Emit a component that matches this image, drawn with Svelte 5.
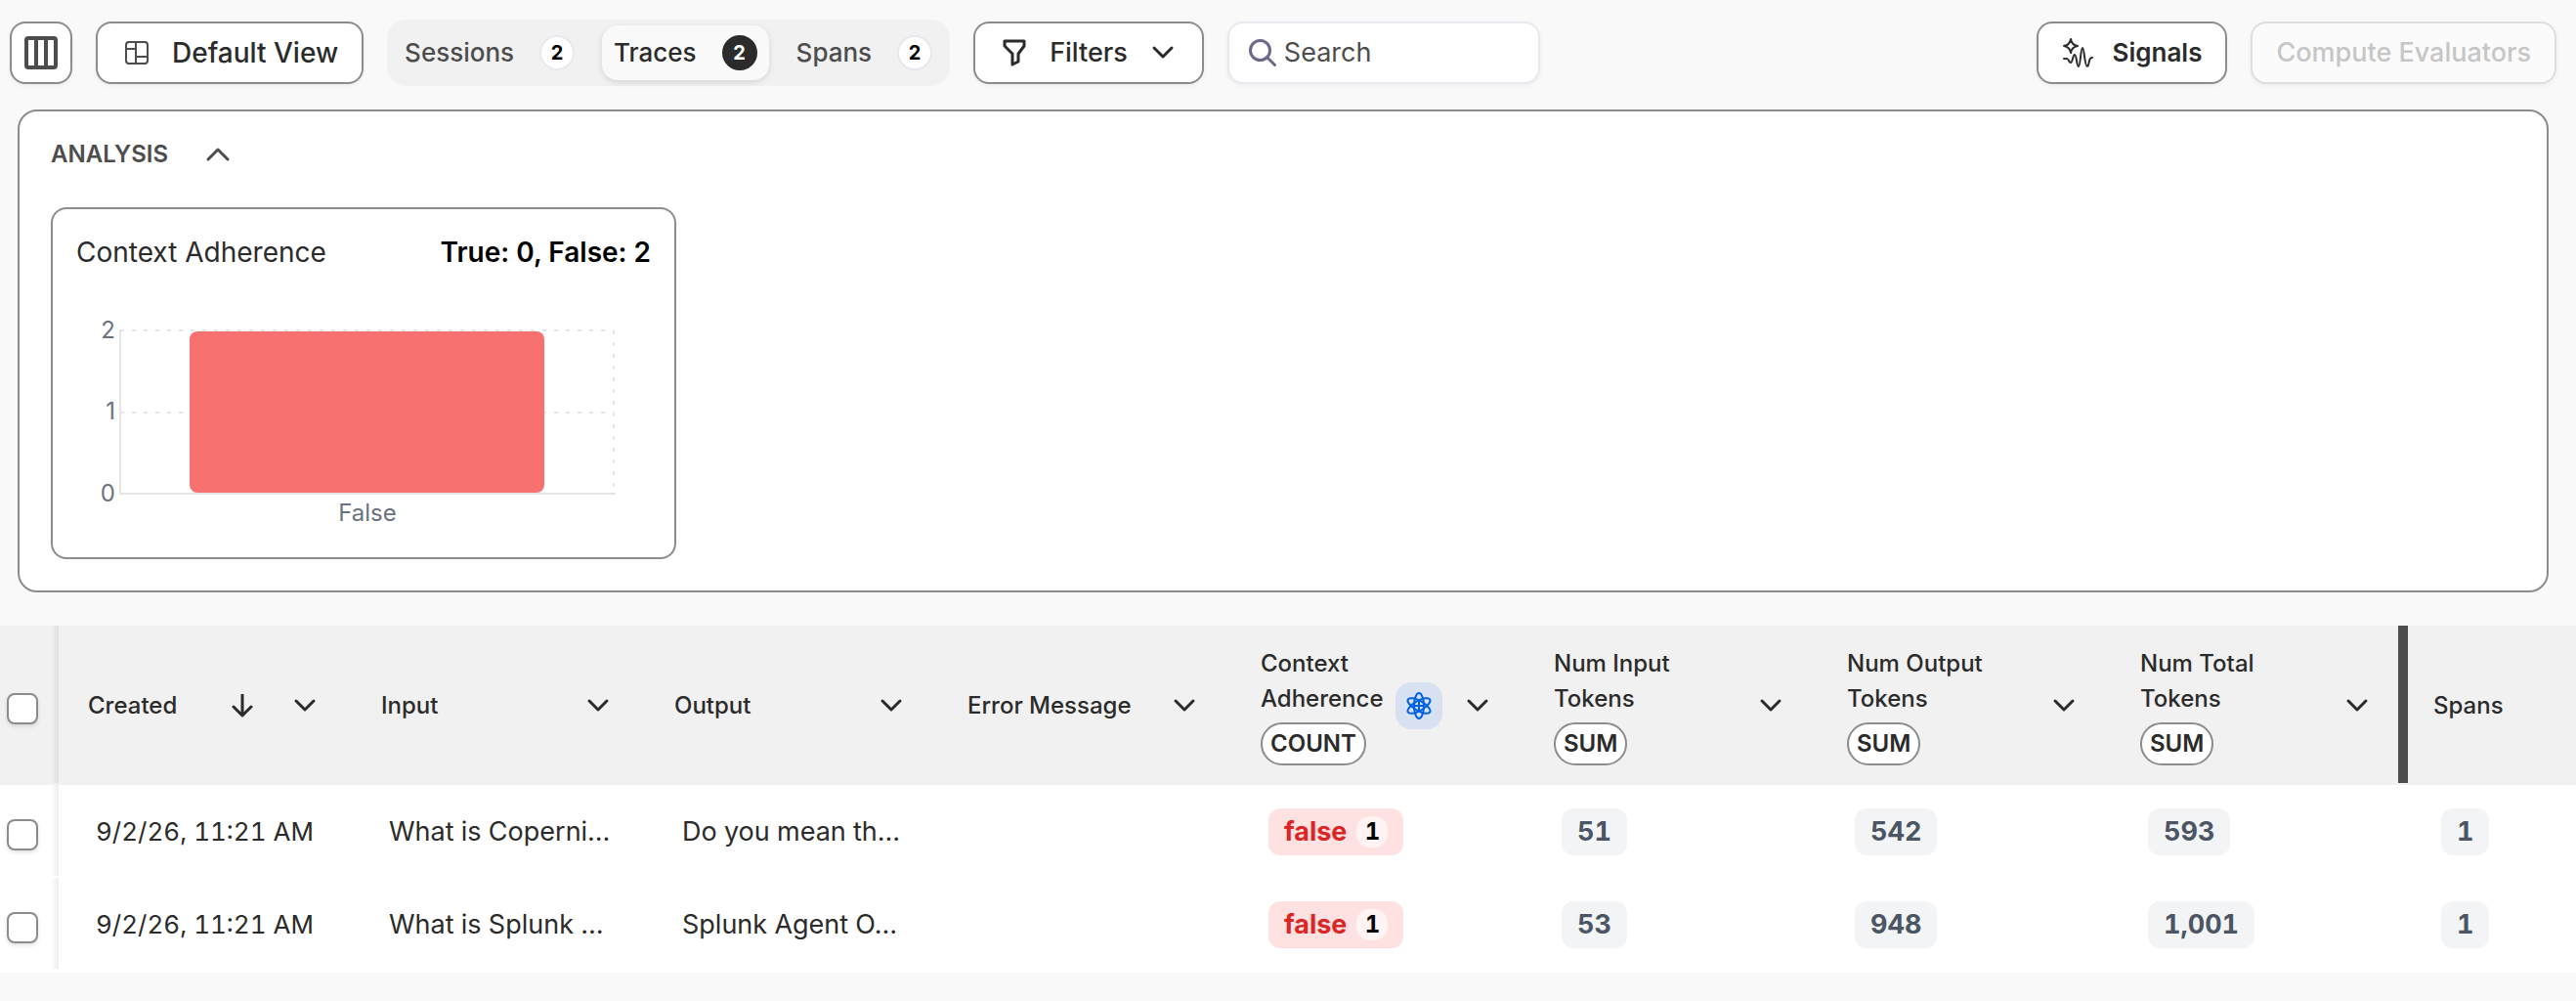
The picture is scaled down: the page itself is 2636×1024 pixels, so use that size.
<script>
  let tabs = [
    { name: 'Sessions', count: 2 },
    { name: 'Traces', count: 2 },
    { name: 'Spans', count: 2 }
  ];
  let active = $state('Traces');
  let open = $state(true);

  const columns = [
    { name: 'Created', sorted: true },
    { name: 'Input' },
    { name: 'Output' },
    { name: 'Error Message' },
    { name: 'Context Adherence', agg: 'COUNT', metric: true },
    { name: 'Num Input Tokens', agg: 'SUM' },
    { name: 'Num Output Tokens', agg: 'SUM' },
    { name: 'Num Total Tokens', agg: 'SUM', resizing: true }
  ];

  const rows = [
    { created: '9/2/26, 11:21 AM', input: 'What is Coperni…', output: 'Do you mean th…', adherence: 'false', count: 1, tokens: ['51', '542', '593'], spans: 1 },
    { created: '9/2/26, 11:21 AM', input: 'What is Splunk …', output: 'Splunk Agent O…', adherence: 'false', count: 1, tokens: ['53', '948', '1,001'], spans: 1 }
  ];
</script>

{#snippet chevron()}
  <svg class="chevron" viewBox="0 0 24 24" aria-hidden="true"><path d="M3 7l9 9 9-9" /></svg>
{/snippet}

<div class="page">
  <header class="toolbar">
    <button class="btn icon-only" aria-label="Columns">
      <svg class="columns-icon" viewBox="0 0 34 34" aria-hidden="true">
        <rect x="2" y="2" width="30" height="30" rx="2" />
        <path d="M12 2v30M22 2v30" />
      </svg>
    </button>
    <button class="btn view">
      <svg class="view-icon" viewBox="0 0 24 24" aria-hidden="true">
        <rect x="1" y="1" width="22" height="22" rx="3" />
        <path d="M11 1v22M1 8h10M11 16h12" />
      </svg>
      Default View
    </button>
    <div class="tabs" role="tablist">
      {#each tabs as tab}
        <button class="tab" class:active={active === tab.name} role="tab" aria-selected={active === tab.name} onclick={() => (active = tab.name)}>
          {tab.name}<span class="count">{tab.count}</span>
        </button>
      {/each}
    </div>
    <button class="btn filters">
      <svg class="funnel" viewBox="0 0 24 28" aria-hidden="true">
        <path d="M2 2h20v5l-6 8v8l-6 3V15L2 7z" />
      </svg>
      Filters
      {@render chevron()}
    </button>
    <label class="search">
      <svg viewBox="0 0 28 28" aria-hidden="true">
        <circle cx="11.500" cy="11.500" r="10" /><path d="M18.500 18.500L26.500 26.500" />
      </svg>
      <input type="text" placeholder="Search" aria-label="Search" />
    </label>
    <div class="actions">
      <button class="btn signals">
        <svg class="signals-icon" viewBox="0 0 32 32" aria-hidden="true">
          <path d="M9 2q1 6 7 7q-6 1-7 7q-1-6-7-7q6-1 7-7z" />
          <path d="M2 22h3c2 0 2 4 4 4s2-8 4-8 2 12 4 12 2-19 4-19 2 19 5 19c2 0 1-10 5-9" />
        </svg>
        Signals
      </button>
      <button class="btn compute" disabled>Compute Evaluators</button>
    </div>
  </header>

  <section class="analysis">
    <button class="analysis-toggle" aria-expanded={open} onclick={() => (open = !open)}>
      ANALYSIS
      <svg class="caret" viewBox="0 0 26 16" aria-hidden="true"><path d="M3 13L13 3l10 10" /></svg>
    </button>
    {#if open}
      <article class="card">
        <div class="card-head">
          <h2>Context Adherence</h2>
          <strong>True: 0, False: 2</strong>
        </div>
        <svg class="chart" viewBox="0 0 588 230" role="img" aria-label="Context Adherence: False 2">
          <path class="grid" d="M45 22H550M45 106H550M550 22V189" />
          <rect class="bar" x="116" y="23" width="363" height="165" rx="8" />
          <path class="axis" d="M45 22V189H551" />
          <text x="40" y="30" text-anchor="end">2</text>
          <text x="40" y="113" text-anchor="end">1</text>
          <text x="40" y="197" text-anchor="end">0</text>
          <text x="298" y="217" text-anchor="middle">False</text>
        </svg>
      </article>
    {/if}
  </section>

  <div class="table-wrap">
    <table>
      <thead>
        <tr>
          <th class="check"><input type="checkbox" aria-label="Select all rows" /></th>
          {#each columns as col}
            <th class="col" class:resizing={col.resizing}>
              <div class="head">
                <div class="title" class:narrow={col.agg}>
                  <span>{col.name}</span>
                  {#if col.agg}<span class="agg">{col.agg}</span>{/if}
                </div>
                {#if col.metric}
                  <span class="atom">
                    <svg viewBox="0 0 28 28" aria-hidden="true">
                      <ellipse cx="14" cy="14" rx="5" ry="13" />
                      <ellipse cx="14" cy="14" rx="5" ry="13" transform="rotate(60 14 14)" />
                      <ellipse cx="14" cy="14" rx="5" ry="13" transform="rotate(120 14 14)" />
                      <path d="M14 10v8M10 14h8" />
                    </svg>
                  </span>
                {/if}
                {#if col.sorted}
                  <svg class="sort" viewBox="0 0 22 24" aria-label="Sorted descending"><path d="M11 1v21M2 13l9 9 9-9" /></svg>
                {/if}
                <button class="menu" aria-label={`${col.name} options`}>{@render chevron()}</button>
              </div>
            </th>
          {/each}
          <th>Spans</th>
        </tr>
      </thead>
      <tbody>
        {#each rows as row, i}
          <tr>
            <td class="check"><input type="checkbox" aria-label={`Select row ${i + 1}`} /></td>
            <td class="date">{row.created}</td>
            <td>{row.input}</td>
            <td>{row.output}</td>
            <td></td>
            <td><span class="pill bad">{row.adherence}<span class="num">{row.count}</span></span></td>
            {#each row.tokens as value}
              <td><span class="pill">{value}</span></td>
            {/each}
            <td><span class="pill">{row.spans}</span></td>
          </tr>
        {/each}
      </tbody>
    </table>
  </div>
</div>

<style>
  :global(body) {
    background: #f9f9f9;
  }
  .page {
    font-family: Inter, 'Liberation Sans', sans-serif;
    font-size: 28px;
    line-height: 36px;
    color: #2b2b2b;
  }
  .page * {
    box-sizing: border-box;
  }
  button,
  input {
    font: inherit;
    color: inherit;
    margin: 0;
  }
  svg {
    display: block;
    flex: none;
    fill: none;
    stroke: currentColor;
    stroke-width: 2;
    stroke-linecap: round;
    stroke-linejoin: round;
  }
  .chevron {
    width: 24px;
    height: 24px;
    stroke-width: 3;
  }

  .toolbar {
    display: flex;
    align-items: center;
    gap: 24px;
    padding: 20px 20px 24px 10px;
  }
  .btn {
    display: flex;
    align-items: center;
    height: 64px;
    padding: 0 24px;
    border: 2px solid #8c8c8c;
    border-radius: 16px;
    background: #fff;
    font-weight: 500;
    white-space: nowrap;
    box-shadow: 0 2px 4px #0000000d;
  }
  .icon-only {
    width: 64px;
    padding: 0;
    justify-content: center;
    color: #4d4d4d;
  }
  .columns-icon {
    width: 34px;
    height: 34px;
    stroke-width: 4;
  }
  .view {
    gap: 24px;
    padding: 0 24px 0 28px;
  }
  .view-icon {
    width: 24px;
    height: 24px;
    color: #4d4d4d;
  }
  .tabs {
    display: flex;
    align-items: center;
    gap: 16px;
    height: 68px;
    padding: 0 6px;
    border-radius: 20px;
    background: #f1f1f1;
  }
  .tab {
    display: flex;
    align-items: center;
    gap: 26px;
    height: 56px;
    padding: 0 12px;
    border: 0;
    border-radius: 16px;
    background: none;
    color: #4d4d4d;
    font-size: 26px;
    font-weight: 500;
  }
  .tab.active {
    background: #f9f9f9;
    color: #2b2b2b;
    box-shadow: 0 2px 6px #0000001f;
  }
  .count {
    display: flex;
    align-items: center;
    justify-content: center;
    width: 36px;
    height: 36px;
    border: 2px solid #e8e8ee;
    border-radius: 18px;
    background: #fff;
    color: #000;
    font-size: 20px;
    font-weight: 700;
  }
  .active .count {
    border-color: #2b2b2b;
    background: #2b2b2b;
    color: #fff;
  }
  .filters {
    gap: 24px;
    padding: 0 28px;
    font-size: 27px;
  }
  .funnel {
    width: 24px;
    height: 28px;
    stroke-width: 3;
  }
  .search {
    display: flex;
    align-items: center;
    gap: 8px;
    width: 320px;
    height: 64px;
    padding: 0 20px;
    border: 2px solid #e8e8ee;
    border-radius: 16px;
    background: #fff;
    font-size: 27px;
    box-shadow: 0 2px 4px #0000000d;
  }
  .search svg {
    width: 28px;
    height: 28px;
    color: #6e6787;
    stroke-width: 3;
  }
  .search input {
    flex: 1;
    min-width: 0;
    padding: 0;
    border: 0;
    outline: 0;
    background: none;
  }
  .search input::placeholder {
    color: #4d4d4d;
    opacity: 1;
  }
  .actions {
    display: flex;
    gap: 24px;
    margin-left: auto;
  }
  .signals {
    gap: 20px;
    font-size: 26px;
    font-weight: 600;
  }
  .signals-icon {
    width: 32px;
    height: 32px;
  }
  .compute {
    border-color: #dedede;
    background: #fbfbfb;
    color: #c6c6c6;
    font-size: 27px;
  }

  .analysis {
    margin: 0 28px 0 18px;
    padding: 20px 32px 32px;
    border: 2px solid #8c8c8c;
    border-radius: 20px;
    background: #fff;
  }
  .analysis-toggle {
    display: flex;
    align-items: center;
    gap: 38px;
    height: 48px;
    padding: 0;
    border: 0;
    background: none;
    color: #4d4d4d;
    font-size: 24px;
    font-weight: 600;
  }
  .caret {
    width: 26px;
    height: 16px;
    stroke-width: 3;
  }
  .card {
    width: 640px;
    height: 360px;
    margin-top: 30px;
    padding: 26px 24px;
    border: 2px solid #8c8c8c;
    border-radius: 16px;
  }
  .card-head {
    display: flex;
    justify-content: space-between;
  }
  h2,
  strong {
    margin: 0;
    font-size: 28px;
    font-weight: 400;
  }
  strong {
    color: #000;
    font-weight: 600;
  }
  .chart {
    width: 100%;
    margin-top: 40px;
  }
  .chart .grid {
    stroke: #e5e5e8;
    stroke-dasharray: 4 8;
    stroke-linecap: butt;
  }
  .chart .axis {
    stroke: #e5e5e8;
  }
  .chart .bar {
    fill: #f87171;
    stroke: none;
  }
  .chart text {
    fill: #6b7280;
    stroke: none;
    font-size: 24px;
  }

  .table-wrap {
    margin-top: 34px;
    padding-bottom: 2px;
    overflow: hidden;
    background: #fff;
  }
  table {
    width: 100%;
    border-collapse: collapse;
    table-layout: fixed;
    text-align: left;
  }
  th {
    height: 163px;
    padding: 0 30px;
    background-color: #f1f1f1;
    font-size: 24px;
    font-weight: 500;
    white-space: nowrap;
  }
  td {
    height: 95px;
    padding: 0 38px;
    font-size: 27px;
    font-variant-numeric: tabular-nums;
    white-space: nowrap;
  }
  .date {
    font-size: 26px;
  }
  .col {
    position: relative;
    width: 300px;
  }
  .resizing::after {
    content: '';
    position: absolute;
    top: 0;
    right: -4px;
    bottom: 2px;
    z-index: 1;
    width: 10px;
    background: #4d4d4d;
  }
  .check {
    width: 60px;
    padding: 0 0 0 7px;
    background-image: linear-gradient(to right, #0000, #00000012);
    background-position: right top;
    background-repeat: no-repeat;
    background-size: 8px calc(100% - 2px);
  }
  .check input {
    display: block;
    width: 32px;
    height: 32px;
    margin-top: 6px;
    appearance: none;
    border: 2px solid #8c8c8c;
    border-radius: 8px;
    background: #fff;
    box-shadow: 0 2px 4px #0000001f;
  }
  .check input:checked {
    background: #2b2b2b;
  }
  .head {
    display: flex;
    align-items: center;
  }
  .title {
    flex: 1;
  }
  .narrow {
    display: flex;
    flex-direction: column;
    align-items: flex-start;
    gap: 6px;
    white-space: normal;
  }
  .agg {
    display: flex;
    align-items: center;
    height: 44px;
    padding: 0 8px;
    border: 2px solid #8c8c8c;
    border-radius: 22px;
    background: #fff;
    font-weight: 600;
  }
  .atom {
    display: grid;
    place-items: center;
    width: 48px;
    height: 48px;
    border-radius: 16px;
    background: #d7e1f1;
    color: #0062e0;
  }
  .atom svg {
    width: 28px;
    height: 28px;
  }
  .sort {
    width: 22px;
    height: 24px;
    margin-right: 17px;
    stroke-width: 3;
  }
  .menu {
    margin: 0 6px 0 24px;
    padding: 0;
    border: 0;
    background: none;
  }
  .pill {
    display: inline-flex;
    align-items: center;
    gap: 10px;
    height: 48px;
    padding: 0 16px;
    border-radius: 12px;
    background: #f3f4f6;
    color: #4b5563;
    font-weight: 700;
    vertical-align: middle;
  }
  .bad {
    background: #fee2e2;
    color: #dc2626;
  }
  .num {
    display: flex;
    align-items: center;
    justify-content: center;
    width: 32px;
    height: 32px;
    border-radius: 14px;
    background: #fff3f3;
    color: #000;
    font-size: 24px;
  }
</style>
